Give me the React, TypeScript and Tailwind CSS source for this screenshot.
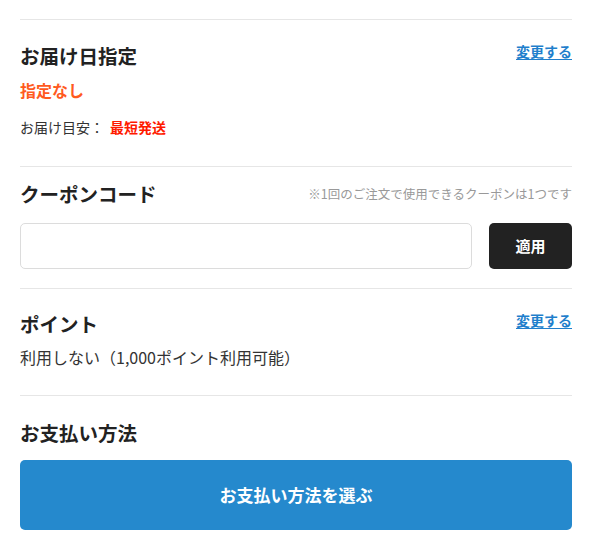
export default function App() {
  return (
    <div
      className="w-[592px] bg-white px-5 pt-[19px] text-[#222]"
      style={{ fontFamily: '"Noto Sans CJK JP", "Noto Sans", sans-serif' }}
    >
      {/* Delivery date */}
      <section className="border-t border-[#e6e6e6] pt-[23px] pb-[29px]">
        <div className="flex items-start justify-between">
          <h2 className="text-[19.5px] leading-[26px] font-bold">お届け日指定</h2>
          <a href="#" className="-mt-[2px] text-[14px] leading-[20px] font-bold text-[#1f7fcc] underline underline-offset-2">
            変更する
          </a>
        </div>
        <p className="mt-[9px] text-[16px] leading-[24px] font-bold text-[#ff5a1e]">指定なし</p>
        <p className="mt-[15px] text-[14px] leading-[20px] text-[#333]">
          お届け目安：
          <span className="ml-[6px] font-bold text-[#ff1a00]">最短発送</span>
        </p>
      </section>

      {/* Coupon */}
      <section className="border-t border-[#e6e6e6] pt-[14px] pb-[19px]">
        <div className="flex items-center justify-between">
          <h2 className="text-[19.5px] leading-[26px] font-bold">クーポンコード</h2>
          <span className="text-[12.5px] text-[#999]">※1回のご注文で使用できるクーポンは1つです</span>
        </div>
        <div className="mt-4 flex gap-[17px]">
          <input
            type="text"
            className="h-[46px] flex-1 rounded-[5px] border border-[#dcdcdc] px-3 text-[14px] outline-none"
          />
          <button className="h-[46px] w-[83px] rounded-[5px] bg-[#222] text-[15px] font-bold text-white">
            適用
          </button>
        </div>
      </section>

      {/* Points */}
      <section className="border-t border-[#e6e6e6] pt-[22px] pb-[27px]">
        <div className="flex items-start justify-between">
          <h2 className="text-[19.5px] leading-[26px] font-bold">ポイント</h2>
          <a href="#" className="-mt-[1px] text-[14px] leading-[20px] font-bold text-[#1f7fcc] underline underline-offset-2">
            変更する
          </a>
        </div>
        <p className="mt-[9px] text-[16px] leading-[22px] text-[#333]">利用しない（1,000ポイント利用可能）</p>
      </section>

      {/* Payment */}
      <section className="border-t border-[#e6e6e6] pt-[24px] pb-5">
        <h2 className="text-[19.5px] leading-[26px] font-bold">お支払い方法</h2>
        <button className="mt-[14px] h-[70px] w-full rounded-[5px] bg-[#2589cd] text-[17px] font-bold text-white">
          お支払い方法を選ぶ
        </button>
      </section>
    </div>
  );
}
